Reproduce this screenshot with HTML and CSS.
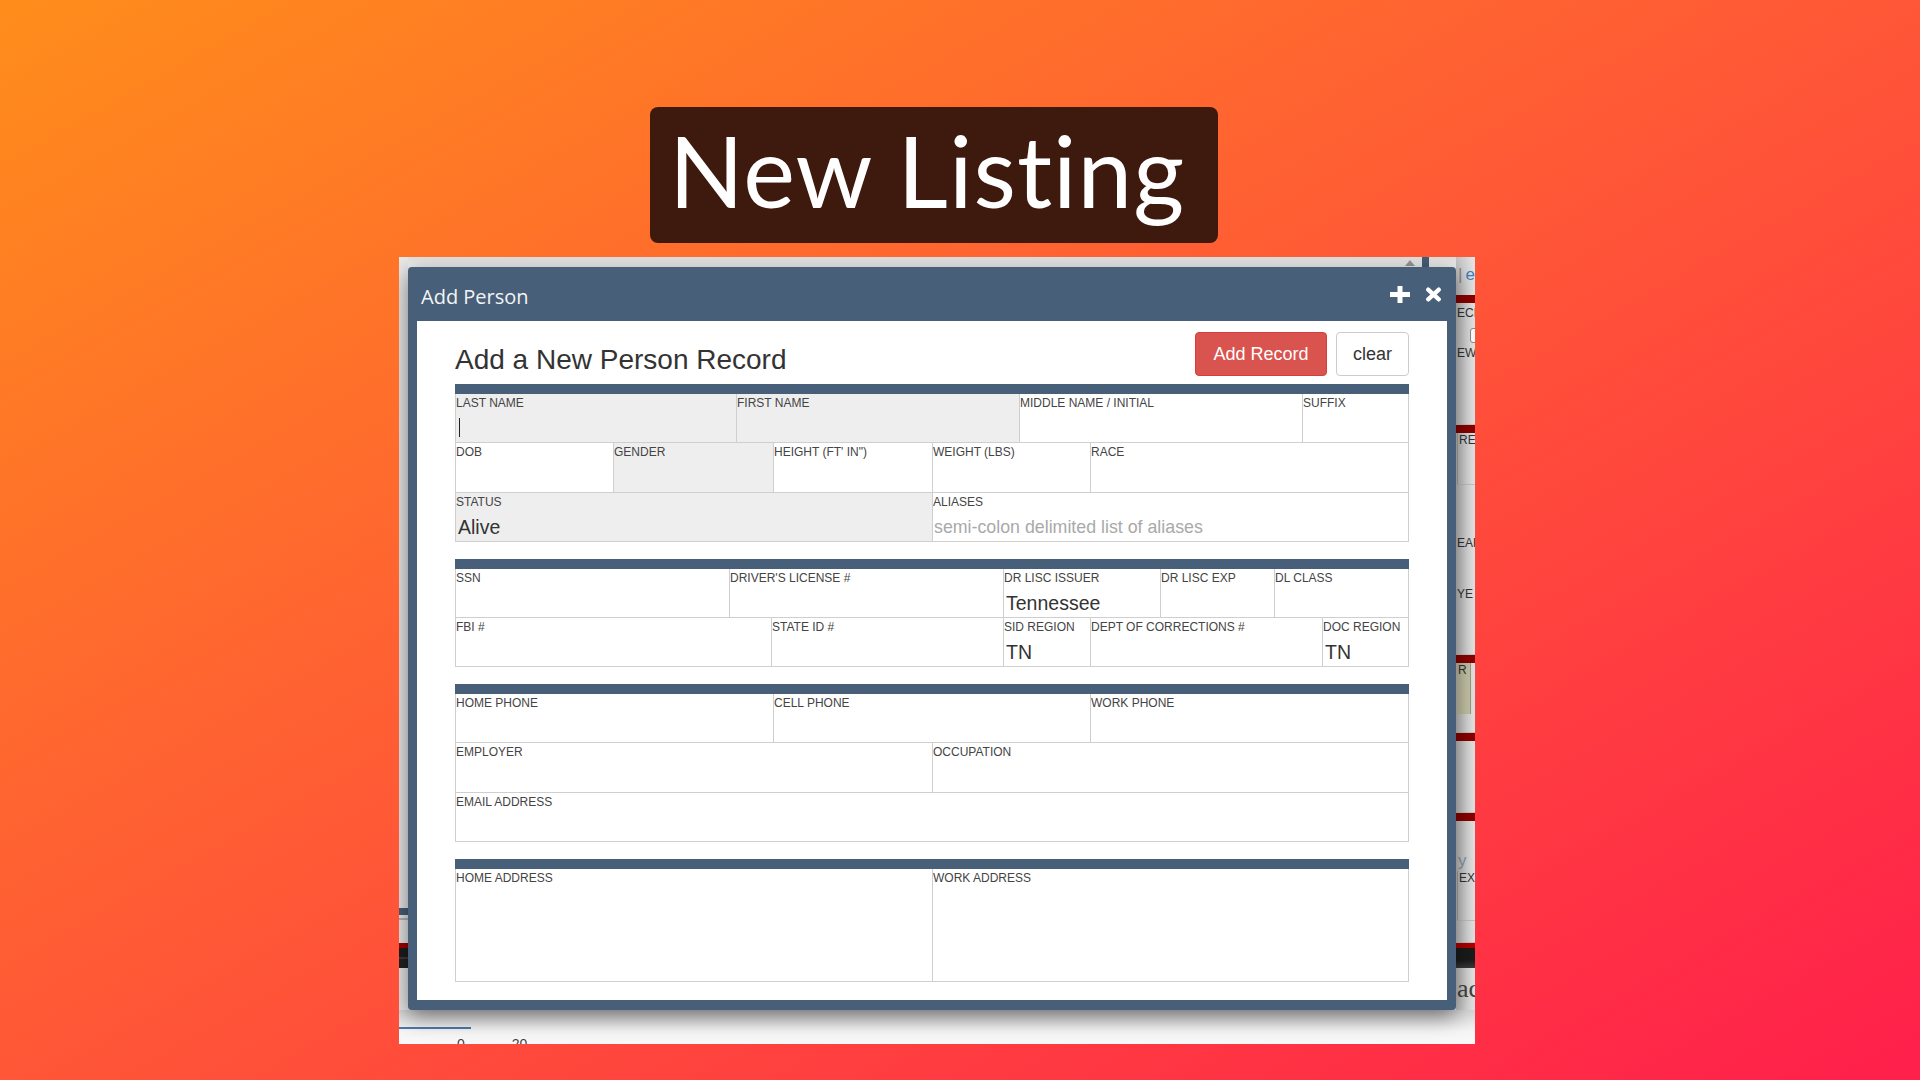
FILE: index.html
```html
<!DOCTYPE html>
<html lang="en">
<head>
    <meta charset="UTF-8">
    <meta name="viewport" content="width=device-width, initial-scale=1.0">
    <title>New Listing - Add Person</title>
    <link rel="stylesheet" href="styles.css">
</head>
<body>
    <div class="stage">
        <div class="headline">New Listing</div>

        <div class="panel">
            <div class="app">
                <div class="app-left">
                    <div class="l-space"></div>
                    <div class="l-slate"></div>
                    <div class="l-line"></div>
                    <div class="l-red"></div>
                    <div class="l-dark"></div>
                </div>
                <div class="app-mid">
                    <div class="app-top">
                        <span class="scroll-arrow"></span>
                        <span class="scroll-bar"></span>
                    </div>
                </div>
                <div class="app-right">
                    <div class="r-sec r-sec-0"><span class="r-pipe">|</span><span class="r-link">e</span></div>
                    <div class="r-sec r-sec-1">
                        <div class="r-red"></div>
                        <div class="r-txt">ECE</div>
                        <div class="r-check"></div>
                        <div class="r-txt">EW</div>
                    </div>
                    <div class="r-sec r-sec-2">
                        <div class="r-red"></div>
                        <div class="r-box"><span class="r-txt">RE</span></div>
                        <div class="r-txt r-txt-eaf">EAF</div>
                        <div class="r-txt r-txt-ye">YE</div>
                    </div>
                    <div class="r-sec r-sec-3">
                        <div class="r-red"></div>
                        <div class="r-olive"><span class="r-txt">R</span></div>
                    </div>
                    <div class="r-sec r-sec-4">
                        <div class="r-red"></div>
                    </div>
                    <div class="r-sec r-sec-5">
                        <div class="r-red"></div>
                        <div class="r-y">y</div>
                        <div class="r-box r-box-ex"><span class="r-txt">EX</span></div>
                    </div>
                    <div class="r-sec r-sec-6">
                        <div class="r-red r-red-thin"></div>
                        <div class="r-black"></div>
                        <div class="r-ac">ac</div>
                    </div>
                </div>
            </div>

            <div class="app-foot">
                <div class="foot-line"></div>
                <div class="foot-axis">
                    <span>0</span>
                    <span>20</span>
                </div>
            </div>

            <div class="dialog">
                <div class="dialog-head">
                    <span class="dialog-title">Add Person</span>
                    <span class="dialog-icons">
                        <svg width="20" height="17" viewBox="0 0 20 17"><path d="M7.5 0h5v6h7.5v5h-7.5v6h-5v-6H0V6h7.5z" fill="#fff"/></svg>
                        <svg width="17" height="15" viewBox="0 0 17 15"><path d="M3.2 2.6L13.8 12.4M13.8 2.6L3.2 12.4" stroke="#fff" stroke-width="4.2" stroke-linecap="round"/></svg>
                    </span>
                </div>

                <div class="dialog-body">
                    <div class="record-head">
                        <h2>Add a New Person Record</h2>
                        <button class="btn btn-add">Add Record</button>
                        <button class="btn btn-clear">clear</button>
                    </div>

                    <div class="fields">
                        <div class="row row-names">
                            <div class="cell shaded"><label>LAST NAME</label><span class="caret"></span></div>
                            <div class="cell shaded"><label>FIRST NAME</label></div>
                            <div class="cell"><label>MIDDLE NAME / INITIAL</label></div>
                            <div class="cell"><label>SUFFIX</label></div>
                        </div>
                        <div class="row row-body row-mid">
                            <div class="cell"><label>DOB</label></div>
                            <div class="cell shaded"><label>GENDER</label></div>
                            <div class="cell"><label>HEIGHT (FT' IN")</label></div>
                            <div class="cell"><label>WEIGHT (LBS)</label></div>
                            <div class="cell"><label>RACE</label></div>
                        </div>
                        <div class="row row-half">
                            <div class="cell shaded"><label>STATUS</label><div class="value">Alive</div></div>
                            <div class="cell"><label>ALIASES</label><div class="placeholder">semi-colon delimited list of aliases</div></div>
                        </div>
                    </div>

                    <div class="fields">
                        <div class="row row-license">
                            <div class="cell"><label>SSN</label></div>
                            <div class="cell"><label>DRIVER'S LICENSE #</label></div>
                            <div class="cell"><label>DR LISC ISSUER</label><div class="value">Tennessee</div></div>
                            <div class="cell"><label>DR LISC EXP</label></div>
                            <div class="cell"><label>DL CLASS</label></div>
                        </div>
                        <div class="row row-ids">
                            <div class="cell"><label>FBI #</label></div>
                            <div class="cell"><label>STATE ID #</label></div>
                            <div class="cell"><label>SID REGION</label><div class="value">TN</div></div>
                            <div class="cell"><label>DEPT OF CORRECTIONS #</label></div>
                            <div class="cell"><label>DOC REGION</label><div class="value">TN</div></div>
                        </div>
                    </div>

                    <div class="fields">
                        <div class="row row-phones">
                            <div class="cell"><label>HOME PHONE</label></div>
                            <div class="cell"><label>CELL PHONE</label></div>
                            <div class="cell"><label>WORK PHONE</label></div>
                        </div>
                        <div class="row row-half row-mid">
                            <div class="cell"><label>EMPLOYER</label></div>
                            <div class="cell"><label>OCCUPATION</label></div>
                        </div>
                        <div class="row row-full">
                            <div class="cell"><label>EMAIL ADDRESS</label></div>
                        </div>
                    </div>

                    <div class="fields">
                        <div class="row row-half row-tall">
                            <div class="cell"><label>HOME ADDRESS</label></div>
                            <div class="cell"><label>WORK ADDRESS</label></div>
                        </div>
                    </div>
                </div>
            </div>
        </div>
    </div>
</body>
</html>
```

FILE: styles.css
```css
* {
    box-sizing: border-box;
    margin: 0;
    padding: 0;
}

body {
    min-height: 100vh;
    overflow: hidden;
    font-family: 'Liberation Sans', Arial, sans-serif;
    background: linear-gradient(to bottom right, #ff8d1b 0%, #ff5936 48%, #ff1f4b 100%);
}

.stage {
    display: flex;
    flex-direction: column;
    align-items: flex-start;
    gap: 14px;
    padding: 107px 0 0 399px;
}

.headline {
    margin-left: 251px;
    width: 568px;
    height: 136px;
    display: flex;
    align-items: center;
    padding: 0 0 10px 19px;
    background-color: #3e190e;
    border-radius: 8px;
    color: #fff;
    font-family: Lato, 'Open Sans', sans-serif;
    font-size: 98px;
    line-height: 1;
    letter-spacing: 1px;
    font-variant-ligatures: none;
}

/* screenshot of the app behind the dialog */

.panel {
    position: relative;
    width: 1076px;
    height: 787px;
    background-color: #f4f4f4;
    display: flex;
    flex-direction: column;
    overflow: hidden;
}

.app {
    height: 753px;
    display: flex;
}

.app-left {
    width: 9px;
    display: flex;
    flex-direction: column;
    background-color: #e9e9e9;
}

.l-space {
    height: 651px;
}

.l-slate {
    height: 7px;
    background-color: #475f78;
}

.l-line {
    height: 2px;
    margin: 3px 0 23px;
    background-color: #b5b5b5;
}

.l-red {
    height: 5px;
    background-color: #a00000;
}

.l-dark {
    height: 20px;
    background: linear-gradient(#1d1d1d 45%, #555 50%, #222 55%);
}

.app-mid {
    flex: 1;
    background-color: #ececec;
}

.app-top {
    height: 10px;
    display: flex;
    justify-content: flex-end;
    align-items: flex-end;
    gap: 7px;
    padding-right: 27px;
    background: linear-gradient(#e2e2e2, #f1f1f1);
}

.scroll-arrow {
    width: 0;
    height: 0;
    margin-bottom: 1px;
    border-left: 5px solid transparent;
    border-right: 5px solid transparent;
    border-bottom: 6px solid #9a9a9a;
}

.scroll-bar {
    width: 7px;
    height: 10px;
    background-color: #475f78;
}

.app-right {
    width: 19px;
    overflow: hidden;
    display: flex;
    flex-direction: column;
    background: linear-gradient(to right, #c4c4c4, #e6e6e6);
    font-size: 12px;
    color: #333;
    white-space: nowrap;
}

.r-sec {
    display: flex;
    flex-direction: column;
    border-bottom: 1px solid #c4c4c4;
}

.r-sec-0 {
    height: 38px;
    flex-direction: row;
    gap: 3px;
    padding: 8px 0 0 2px;
    font-size: 17px;
    border-bottom: none;
}

.r-pipe {
    color: #8a8a8a;
}

.r-link {
    color: #3b7fc4;
}

.r-sec-1 { height: 130px; }
.r-sec-2 { height: 230px; }
.r-sec-3 { height: 78px; }
.r-sec-4 { height: 80px; }
.r-sec-5 { height: 130px; }
.r-sec-6 { height: 67px; border-bottom: none; }

.r-red {
    height: 8px;
    background-color: #8b0000;
}

.r-red-thin {
    height: 5px;
    background-color: #b00000;
}

.r-black {
    height: 20px;
    background: linear-gradient(#1b1b1b 60%, #3a3a3a);
}

.r-txt {
    padding: 3px 0 0 1px;
    line-height: 14px;
}

.r-txt-eaf {
    margin-top: 48px;
}

.r-txt-ye {
    margin-top: 34px;
}

.r-check {
    width: 14px;
    height: 15px;
    margin: 8px 0 0 14px;
    border: 1px solid #888;
    border-radius: 3px;
    background-color: #fff;
}

.r-box {
    height: 52px;
    margin-left: 1px;
    border-left: 1px solid #a9a9a9;
    border-bottom: 1px solid #c2c2c2;
}

.r-box-ex {
    height: 50px;
}

.r-olive {
    height: 51px;
    margin-left: 1px;
    width: 14px;
    background-color: #c6c4a6;
    border-right: 1px solid #9c9a80;
}

.r-y {
    height: 50px;
    padding: 30px 0 0 2px;
    color: #8a98aa;
    font-size: 17px;
}

.r-ac {
    padding: 6px 0 0 1px;
    font-family: 'Liberation Serif', serif;
    font-size: 26px;
    color: #444;
}

.app-foot {
    flex: 1;
    padding-top: 17px;
    background: linear-gradient(#d5d5d5, #f6f6f6 50%, #fbfbfb);
}

.foot-line {
    width: 72px;
    height: 2px;
    background-color: #4c79a8;
}

.foot-axis {
    display: flex;
    padding: 7px 0 0 58px;
    gap: 47px;
    font-size: 14px;
    color: #444;
    border-bottom: 1px solid #cfcfcf;
}

/* dialog */

.dialog {
    position: absolute;
    left: 9px;
    top: 10px;
    width: 1048px;
    height: 743px;
    display: flex;
    flex-direction: column;
    padding: 0 9px 10px;
    background-color: #475f78;
    border-radius: 4px;
    box-shadow: 0 6px 22px rgba(0, 0, 0, 0.5);
}

.dialog-head {
    height: 54px;
    display: flex;
    align-items: center;
    padding: 5px 5px 0 4px;
}

.dialog-title {
    font-family: 'Open Sans', sans-serif;
    font-size: 20px;
    color: #f4f4f4;
}

.dialog-icons {
    margin-left: auto;
    display: flex;
    align-items: center;
    gap: 15px;
    padding-bottom: 4px;
}

.dialog-body {
    flex: 1;
    background-color: #fff;
    padding: 11px 38px 0;
}

.record-head {
    height: 44px;
    display: flex;
    align-items: flex-end;
    gap: 9px;
    margin-bottom: 8px;
}

h2 {
    flex: 1;
    font-size: 28px;
    font-weight: normal;
    color: #333;
}

.btn {
    height: 44px;
    padding: 0 16px;
    border-radius: 4px;
    font-family: 'Liberation Sans', Arial, sans-serif;
    font-size: 18px;
    cursor: pointer;
}

.btn-add {
    width: 132px;
    background-color: #d9534f;
    border: 1px solid #d43f3a;
    color: #fff;
}

.btn-clear {
    width: 73px;
    background-color: #fff;
    border: 1px solid #ccc;
    color: #333;
}

.fields {
    border-top: 10px solid #475f78;
    margin-bottom: 17px;
}

.row {
    display: grid;
    height: 49px;
}

.row-mid {
    height: 50px;
}

.row-names { grid-template-columns: 282px 283px 283px 106px; }
.row-body { grid-template-columns: 159px 160px 159px 158px 318px; }
.row-half { grid-template-columns: 478px 476px; }
.row-license { grid-template-columns: 275px 274px 157px 114px 134px; }
.row-ids { grid-template-columns: 317px 232px 87px 232px 86px; }
.row-phones { grid-template-columns: 319px 317px 318px; }
.row-full { grid-template-columns: 954px; }

.row-tall {
    height: 113px;
}

.cell {
    padding-top: 2px;
    border-right: 1px solid #cfcfcf;
    border-bottom: 1px solid #cfcfcf;
    background-color: #fff;
    overflow: hidden;
}

.cell:first-child {
    border-left: 1px solid #cfcfcf;
}

.cell.shaded {
    background-color: #eee;
}

label {
    display: block;
    font-size: 12px;
    line-height: 14px;
    color: #444;
    white-space: nowrap;
}

.value {
    margin-top: 7px;
    padding-left: 2px;
    font-size: 19.5px;
    line-height: 22px;
    color: #333;
}

.placeholder {
    margin-top: 7px;
    padding-left: 1px;
    font-size: 17.8px;
    line-height: 22px;
    color: #a9a9a9;
    white-space: nowrap;
}

.caret {
    display: block;
    width: 1px;
    height: 19px;
    margin: 8px 0 0 3px;
    background-color: #222;
}
```
